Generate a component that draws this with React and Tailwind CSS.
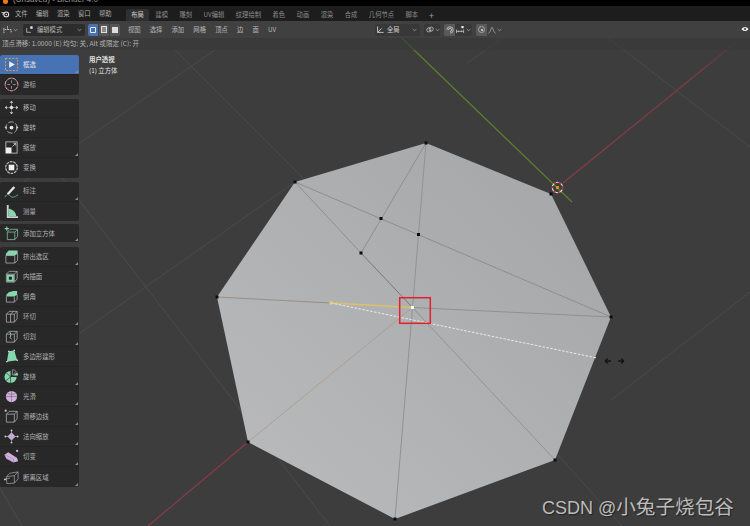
import React from "react";

const CJK = { fontFamily: '"Noto Sans CJK SC", "Liberation Sans", sans-serif' };

// --- tool icons, drawn on a 16x16 box ---
const G = "#86d6ae";
const P = "#cfb2dc";
const L = "#b4b4b4";

const Svg = ({ children }) => (
  <svg viewBox="0 0 16 16" className="w-[15px] h-[15px] shrink-0 ml-[3.5px] mr-[4.5px]" fill="none">
    {children}
  </svg>
);

const Cube = ({ c = L }) => (
  <g stroke={c} strokeWidth="0.8" strokeLinejoin="round">
    <path d="M2.5 5.5 L5.5 2.5 L14 2.5 L14 10.5 L11 14 L2.5 14 Z" />
    <path d="M2.5 5.5 L11 5.5 L11 14 M11 5.5 L14 2.5" />
  </g>
);

const icons = {
  select: (
    <Svg>
      <rect x="1.5" y="1.5" width="13" height="13" stroke="#e0a548" strokeWidth="1" strokeDasharray="2.2 1.4" />
      <path d="M5.5 4.5 L11.5 8 L5.5 11.5 Z" fill="#f0f0f0" />
    </Svg>
  ),
  cursor: (
    <Svg>
      <circle cx="8" cy="8" r="6.8" stroke="#c9c9c9" strokeWidth="1" />
      <circle cx="8" cy="8" r="6.8" stroke="#b0303c" strokeWidth="1" strokeDasharray="3 3" />
      <path d="M8 3.5 V6.5 M8 9.5 V12.5 M3.5 8 H6.5 M9.5 8 H12.5" stroke="#a8a8a8" strokeWidth="0.8" />
    </Svg>
  ),
  move: (
    <Svg>
      <path d="M8 5.5 L10.5 8 L8 10.5 L5.5 8 Z" fill="#e4e4e4" />
      <path d="M8 0.8 L10 3 H6 Z M8 15.2 L10 13 H6 Z M0.8 8 L3 6 V10 Z M15.2 8 L13 6 V10 Z" fill="#d8d8d8" />
      <path d="M8 3 V5 M8 11 V13 M3 8 H5 M11 8 H13" stroke="#9c9c9c" strokeWidth="0.8" />
    </Svg>
  ),
  rotate: (
    <Svg>
      <circle cx="8" cy="8" r="6" stroke="#c4c4c4" strokeWidth="0.9" strokeDasharray="6 2" />
      <circle cx="8" cy="8" r="2" fill="#e8e8e8" />
      <path d="M0.5 8 L3 6.5 V9.5 Z M15.5 8 L13 6.5 V9.5 Z" fill="#d0d0d0" />
    </Svg>
  ),
  scale: (
    <Svg>
      <rect x="2" y="2" width="12" height="12" stroke="#c4c4c4" strokeWidth="0.9" />
      <rect x="2" y="8" width="6" height="6" fill="#f0f0f0" />
      <path d="M9 7 L12.5 3.5 M10 3.5 H12.5 V6" stroke="#cfcfcf" strokeWidth="0.9" />
    </Svg>
  ),
  transform: (
    <Svg>
      <circle cx="8" cy="8" r="6.2" stroke="#b8b8b8" strokeWidth="1.3" strokeDasharray="3 0.8" />
      <rect x="5" y="5" width="6" height="6" fill="#efefef" />
    </Svg>
  ),
  annotate: (
    <Svg>
      <path d="M3 10 L10 2.5 L12 4 L5 11.5 Z" fill="#e4e4e4" />
      <path d="M1 14 C3 10 5 11 7 13 C9 15 11 14 15 11.5" stroke="#64b594" strokeWidth="1" />
    </Svg>
  ),
  measure: (
    <Svg>
      <path d="M3 1 H5 V13 H15 V15 H3 Z" fill="#cfcfcf" />
      <path d="M5 5 C9 5 13 9 13 13 H5 Z" fill={G} />
    </Svg>
  ),
  addCube: (
    <Svg>
      <g stroke="#7fb49c" strokeWidth="0.9">
        <path d="M3.5 6.5 L6.5 3.5 L14.5 3.5 L14.5 11 L11.5 14.5 L3.5 14.5 Z" />
        <path d="M3.5 6.5 L11.5 6.5 L11.5 14.5 M11.5 6.5 L14.5 3.5" />
      </g>
      <path d="M3 0.5 V5 M0.8 2.8 H5.2" stroke={G} strokeWidth="1.1" />
    </Svg>
  ),
  extrude: (
    <Svg>
      <path d="M2 5 L5 1.5 H14.5 V5 L11.5 7 H2 Z" fill={G} />
      <path d="M2 7 H11.5 V15 H2 Z M11.5 15 L14.5 12 V5" stroke={L} strokeWidth="0.8" />
    </Svg>
  ),
  inset: (
    <Svg>
      <Cube />
      <rect x="3" y="6" width="7.5" height="7.5" fill={G} />
      <rect x="5.2" y="8.2" width="3.2" height="3.2" fill="#1f2a25" />
    </Svg>
  ),
  bevel: (
    <Svg>
      <path d="M2.5 6 L5 3.5 L10 2 L14 2 L14 6 L11 8 H2.5 Z" fill={G} />
      <path d="M2.5 8 V14 H11 V8 M11 14 L14 11 V6" stroke={L} strokeWidth="0.8" />
    </Svg>
  ),
  loop: (
    <Svg>
      <Cube />
      <path d="M7 5.5 V14 M7 5.5 L10 2.5" stroke={L} strokeWidth="0.8" />
    </Svg>
  ),
  knife: (
    <Svg>
      <Cube />
      <path d="M6 3 L7.5 6 L6.5 9 L8 11" stroke={G} strokeWidth="1" />
    </Svg>
  ),
  poly: (
    <Svg>
      <path d="M5 2.5 L11 1.5 L14 12 L3 13.5 Z" fill={G} />
      <path d="M5 2.5 h.1 M11 1.5 h.1 M14 12 h.1 M3 13.5 h.1" stroke="#dcdcdc" strokeWidth="1.4" strokeLinecap="square" />
    </Svg>
  ),
  spin: (
    <Svg>
      <path d="M7 8.5 L7 2 A6.5 6.5 0 1 0 13.5 8.5 Z" fill={G} />
      <path d="M7 8.5 L2.5 4 M7 8.5 L2 12.5 M7 8.5 L7 15" stroke="#2b2b2b" strokeWidth="0.7" />
      <path d="M9 6.5 L9 0.8 A6 6 0 0 1 13 2.5 Z" stroke="#b0b0b0" strokeWidth="0.7" />
      <path d="M9.5 7 L14 3.5 A6 6 0 0 1 15 7 Z" fill={G} />
    </Svg>
  ),
  smooth: (
    <Svg>
      <circle cx="8" cy="8" r="6" fill={P} />
      <path d="M2 8 H14 M8 2 V14 M3.5 4.5 C6 6 10 6 12.5 4.5" stroke="#6f5f7a" strokeWidth="0.6" />
    </Svg>
  ),
  slide: (
    <Svg>
      <Cube />
      <circle cx="1.8" cy="1.8" r="1.2" fill={P} />
    </Svg>
  ),
  normal: (
    <Svg>
      <path d="M8 4 L12 8 L8 12 L4 8 Z" fill={P} />
      <path d="M8 1 V15 M1 8 H15 M4 8 L8 4 L12 8 L8 12 Z" stroke="#b9a6c4" strokeWidth="0.7" />
      <circle cx="8" cy="1.5" r="1" fill="#cfcfcf" />
      <circle cx="8" cy="14.5" r="1" fill="#cfcfcf" />
      <circle cx="1.5" cy="8" r="1" fill="#cfcfcf" />
      <circle cx="14.5" cy="8" r="1" fill="#cfcfcf" />
    </Svg>
  ),
  shear: (
    <Svg>
      <path d="M0.5 6 L4.5 3.5 L14 9.5 L15 13 L10 14.5 L2.5 10.5 Z" fill={P} />
      <path d="M2.5 10 L10.5 14 L10 10.5 L0.5 6" stroke="#8d7a98" strokeWidth="0.5" />
      <circle cx="14" cy="2" r="1.2" fill={P} />
    </Svg>
  ),
  rip: (
    <Svg>
      <path d="M2.5 7 L6 3.5 L15 2 L15 9.5 L11 14 L3 14.5 Z M3 7 L11 6 L11 14 M11 6 L15 2" stroke={L} strokeWidth="0.7" />
      <path d="M0.8 10 L6.5 8.5" stroke={L} strokeWidth="0.7" />
      <circle cx="1" cy="10" r="1" fill="#d0d0d0" />
    </Svg>
  ),
};

const groups = [
  { mt: "mt-[5px]", h: "h-[19.8px]", items: [
    { icon: "select", label: "框选", active: true, more: true },
    { icon: "cursor", label: "游标" },
  ] },
  { mt: "mt-[4px]", h: "h-[19.8px]", items: [
    { icon: "move", label: "移动" },
    { icon: "rotate", label: "旋转" },
    { icon: "scale", label: "缩放", more: true },
    { icon: "transform", label: "变换" },
  ] },
  { mt: "mt-[4px]", h: "h-[19.8px]", items: [
    { icon: "annotate", label: "标注", more: true },
    { icon: "measure", label: "测量" },
  ] },
  { mt: "mt-[3px]", h: "h-[18px]", items: [
    { icon: "addCube", label: "添加立方体", more: true },
  ] },
  { mt: "mt-[5px]", h: "h-5", items: [
    { icon: "extrude", label: "挤出选区", more: true },
    { icon: "inset", label: "内插面" },
    { icon: "bevel", label: "倒角" },
    { icon: "loop", label: "环切", more: true },
    { icon: "knife", label: "切割", more: true },
    { icon: "poly", label: "多边形建形" },
    { icon: "spin", label: "旋绕", more: true },
    { icon: "smooth", label: "光滑", more: true },
    { icon: "slide", label: "滑移边线", more: true },
    { icon: "normal", label: "法向缩放", more: true },
    { icon: "shear", label: "切变", more: true },
    { icon: "rip", label: "断离区域", more: true },
  ] },
];

const ToolRow = ({ icon, label, active, more, h }) => (
  <div
    className={`relative flex items-center border-b border-[#232323] last:border-b-0 text-[6.4px] ${h} ${
      active ? "bg-[#4772b3] text-[#e6e6e6]" : "text-[#b4b4b4]"
    }`}
  >
    {icons[icon]}
    <span>{label}</span>
    {more && <span className="absolute right-[1px] bottom-[1px] w-0 h-0 border-l-[3px] border-l-transparent border-b-[3px] border-b-[#8a8a8a]" />}
  </div>
);

// --- header bits ---
const menu = ["文件", "编辑", "渲染", "窗口", "帮助"];
const tabs = ["布局", "建模", "雕刻", "UV编辑", "纹理绘制", "着色", "动画", "渲染", "合成", "几何节点", "脚本"];
const viewMenu = ["视图", "选择", "添加", "网格", "顶点", "边", "面", "UV"];

const Chevron = () => (
  <svg viewBox="0 0 6 4" className="w-[5px] h-[4px] shrink-0" fill="none">
    <path d="M0.8 0.8 L3 3 L5.2 0.8" stroke="#a8a8a8" strokeWidth="0.9" />
  </svg>
);

const BlenderLogo = () => (
  <svg viewBox="0 0 12 10" className="w-[9px] h-[8px] shrink-0" fill="none">
    <circle cx="7" cy="5.5" r="3.2" stroke="#e0e0e0" strokeWidth="1.4" />
    <circle cx="7" cy="5.5" r="1" fill="#e0e0e0" />
    <path d="M0.5 3.2 H5 M2 6 L4.5 3.5" stroke="#e0e0e0" strokeWidth="1.2" />
  </svg>
);

// --- the 3D view, page coordinates ---
const outline = "426,143 551,194 611,317 555,460 395,519 248,442 217,297 295,182";
const verts = [
  [426, 143], [551, 194], [611, 317], [555, 460], [395, 519], [248, 442], [217, 297], [295, 182],
  [381, 218.5], [418.5, 234.5], [361, 253],
];
const grid = [
  [0, 198, 215, 50],
  [80, 333, 295, 182],
  [467, 63, 535, 16],
  [62, 178, 330, 526],
  [175, 50, 303, 178],
  [0, 488, 22, 526],
  [587, 22, 750, 147],
  [750, 292, 611, 400],
  [558, 455, 622, 526],
];

const Viewport = () => (
  <svg className="absolute inset-0" width="750" height="526" viewBox="0 0 750 526" fill="none">
    <defs>
      <linearGradient id="mesh" x1="560" y1="170" x2="270" y2="480" gradientUnits="userSpaceOnUse">
        <stop offset="0" stopColor="#a6a7a9" />
        <stop offset="1" stopColor="#b8b9bb" />
      </linearGradient>
      <linearGradient id="redFade" x1="563" y1="183" x2="745" y2="35" gradientUnits="userSpaceOnUse">
        <stop offset="0" stopColor="#8b3a47" />
        <stop offset="0.75" stopColor="#7c3a45" />
        <stop offset="1" stopColor="#4a3a3d" />
      </linearGradient>
      <linearGradient id="greenFade" x1="557" y1="188" x2="385" y2="22" gradientUnits="userSpaceOnUse">
        <stop offset="0" stopColor="#5a8029" />
        <stop offset="0.8" stopColor="#5a8029" />
        <stop offset="1" stopColor="#474f38" />
      </linearGradient>
    </defs>

    {grid.map(([a, b, c, d], i) => (
      <line key={i} x1={a} y1={b} x2={c} y2={d} stroke="#4a4a4a" strokeWidth="1" />
    ))}

    <line x1="385" y1="22" x2="572" y2="202" stroke="url(#greenFade)" strokeWidth="1.2" />
    <line x1="563" y1="183" x2="745" y2="35" stroke="url(#redFade)" strokeWidth="1.2" />
    <line x1="248" y1="442" x2="148" y2="526" stroke="#8b3a47" strokeWidth="1.2" />

    <polygon points={outline} fill="url(#mesh)" />

    {/* mesh edges */}
    <g strokeWidth="0.9">
      <line x1="426" y1="143" x2="412.5" y2="307.5" stroke="#8f9091" />
      <line x1="412.5" y1="307.5" x2="395" y2="519" stroke="#8c8d8f" />
      <line x1="295" y1="182" x2="611" y2="317" stroke="#8d8a86" />
      <line x1="426" y1="143" x2="361" y2="253" stroke="#8d8a86" />
      <line x1="295" y1="182" x2="361" y2="253" stroke="#8d8a86" />
      <line x1="361" y1="253" x2="412.5" y2="307.5" stroke="#7d6f60" />
      <line x1="412.5" y1="307.5" x2="555" y2="460" stroke="#8f9091" />
      <line x1="412.5" y1="307.5" x2="611" y2="317" stroke="#8c8d8f" />
      <line x1="217" y1="297" x2="331" y2="303" stroke="#98897c" />
      <line x1="248" y1="442" x2="412.5" y2="307.5" stroke="#b09c88" />
      <line x1="331" y1="303" x2="412.5" y2="307.5" stroke="#dcc06a" strokeWidth="1.3" />
      <line x1="331" y1="303" x2="597" y2="358" stroke="#ececec" strokeWidth="1" strokeDasharray="2.5 1.5" />
    </g>

    {verts.map(([x, y], i) => (
      <rect key={i} x={x - 1.5} y={y - 1.5} width="3" height="3" fill="#0c0c0c" />
    ))}
    <rect x="329.5" y="301.5" width="3" height="3" fill="#e2d27c" />
    <rect x="411" y="306" width="3" height="3" fill="#ffffff" />

    <rect x="399.7" y="297.7" width="30.6" height="25.6" stroke="#e0202c" strokeWidth="1.5" />

    {/* 3D cursor */}
    <circle cx="557.5" cy="187.5" r="5.2" stroke="#e8e8e8" strokeWidth="1.1" />
    <circle cx="557.5" cy="187.5" r="5.2" stroke="#b8202c" strokeWidth="1.1" strokeDasharray="2.5 2.5" />
    <rect x="556" y="186" width="3" height="3" fill="#e08a20" />

    {/* slide cursor */}
    <path d="M605 361 H611 M605 361 L608 358.5 M605 361 L608 363.5 M624 361 H618 M624 361 L621 358.5 M624 361 L621 363.5" stroke="#141414" strokeWidth="1.3" />
  </svg>
);

export default function App() {
  return (
    <div className="relative w-[750px] h-[526px] overflow-hidden bg-[#3d3d3d] flex flex-col" style={CJK}>
      <Viewport />

      {/* window title, cut off by the crop */}
      <div className="relative h-[6px] bg-black flex items-end overflow-hidden pl-[3px] gap-[3px] text-[8px] leading-[10px] text-[#9a9a9a] shrink-0">
        <span className="w-[5px] h-[5px] rounded-full bg-[#e87d0d] mb-[2px]" />
        <span className="ml-[2px] mb-[1px]" style={{ fontFamily: '"Liberation Sans", sans-serif' }}>(Unsaved) - Blender 4.0</span>
      </div>

      {/* top menu and workspaces */}
      <div className="relative h-[15px] bg-[#1d1d1d] flex items-center text-[6.3px] text-[#b0b0b0] shrink-0">
        <span className="ml-[1px] mr-[5px]"><BlenderLogo /></span>
        <div className="flex gap-[8.4px]">
          {menu.map((m) => <span key={m}>{m}</span>)}
        </div>
        <div className="flex ml-[14px] self-end h-[12px] items-center">
          {tabs.map((t, i) => (
            <span
              key={i}
              className={`px-[5px] mx-[0.75px] h-full flex items-center rounded-t-[2px] ${i === 0 ? "bg-[#303030] text-[#d0d0d0]" : "text-[#8c8c8c]"}`}
            >
              {t}
            </span>
          ))}
          <span className="ml-[5px] text-[#a0a0a0] text-[9px] leading-none">+</span>
        </div>
      </div>

      {/* 3D view header */}
      <div className="relative h-[17px] bg-[#404040]/90 flex items-center text-[6.3px] text-[#b8b8b8] shrink-0">
        <div className="flex items-center gap-[1px] ml-[3px] w-[16px]">
          <svg viewBox="0 0 10 10" className="w-[9px] h-[9px] shrink-0" fill="none">
            <path d="M1 9 V5 H5 V1 M5 5 H9 V9 M1 5 V3" stroke="#c8c8c8" strokeWidth="1" strokeDasharray="1.8 0.7" />
          </svg>
          <Chevron />
        </div>
        <div className="ml-[4px] w-[62px] h-[12px] bg-[#2c2c2c] rounded-[2px] flex items-center px-[3px]">
          <svg viewBox="0 0 10 10" className="w-[7px] h-[7px] shrink-0 mr-[4px]" fill="none">
            <path d="M1 3 V9 H7" stroke="#d8d8d8" strokeWidth="1" />
            <rect x="6" y="0.5" width="3.5" height="3.5" fill="#e4e4e4" />
          </svg>
          <span className="flex-1">编辑模式</span>
          <Chevron />
        </div>
        <div className="ml-[3px] flex gap-[1px]">
          <div className="w-[10px] h-[12px] rounded-l-[2px] bg-[#4772b3] flex items-center justify-center">
            <span className="w-[6px] h-[6px] border border-[#e8e8e8] rounded-tl-[1px]" />
          </div>
          <div className="w-[10px] h-[12px] bg-[#565656] flex items-center justify-center">
            <span className="w-[6px] h-[7px] border border-[#e0e0e0] bg-[#8a8a8a]" />
          </div>
          <div className="w-[10px] h-[12px] rounded-r-[2px] bg-[#565656] flex items-center justify-center">
            <span className="w-[6px] h-[6px] bg-[#dedede]" />
          </div>
        </div>
        <div className="ml-[8px] flex gap-[9.2px] w-[247px]">
          {viewMenu.map((m) => <span key={m}>{m}</span>)}
        </div>
        <div className="flex items-center">
          <div className="w-[45px] h-[12px] bg-[#383838] rounded-[2px] flex items-center pl-[1px] pr-[3px]">
            <svg viewBox="0 0 10 10" className="w-[8px] h-[8px] mr-[3px] shrink-0" fill="none">
              <path d="M2 0.5 V8 H9.5 M2 8 L7 3" stroke="#d0d0d0" strokeWidth="1.1" />
            </svg>
            <span className="flex-1 text-[#d0d0d0]">全局</span>
            <Chevron />
          </div>
          <div className="ml-[4px] w-[16px] h-[12px] bg-[#383838] rounded-[2px] flex items-center pl-[2px] gap-[1px]">
            <svg viewBox="0 0 10 8" className="w-[8px] h-[7px] shrink-0" fill="none">
              <circle cx="3.5" cy="4.5" r="2.6" stroke="#d0d0d0" strokeWidth="0.9" />
              <circle cx="6.5" cy="3.5" r="2.6" stroke="#d0d0d0" strokeWidth="0.9" />
            </svg>
            <Chevron />
          </div>
          <div className="ml-[4px] w-[11px] h-[12px] bg-[#595959] rounded-l-[2px] flex items-center justify-center">
            <svg viewBox="0 0 10 10" className="w-[8px] h-[8px]" fill="none">
              <path d="M1 5 A4 4 0 1 1 5 9 M3 5 A2 2 0 1 1 5 7" stroke="#cfcfcf" strokeWidth="1" />
            </svg>
          </div>
          <div className="w-[17px] h-[12px] bg-[#383838] rounded-r-[2px] flex items-center pl-[1px] gap-[1px]">
            <svg viewBox="0 0 10 9" className="w-[9px] h-[8px] shrink-0" fill="none">
              <path d="M0.5 4 V8 M0.5 6 H8.5 M3 5 V7 M6 5 V7 M8.5 4 V8" stroke="#d0d0d0" strokeWidth="0.8" />
              <rect x="6" y="0" width="2.5" height="2.5" fill="#f0f0f0" />
            </svg>
            <Chevron />
          </div>
          <div className="ml-[4px] w-[11px] h-[12px] bg-[#595959] rounded-l-[2px] flex items-center justify-center">
            <span className="w-[7px] h-[7px] rounded-full border border-[#a8a8a8] flex items-center justify-center">
              <span className="w-[2px] h-[2px] rounded-full bg-[#e0e0e0]" />
            </span>
          </div>
          <div className="w-[16px] h-[12px] flex items-center pl-[1px] gap-[1px]">
            <svg viewBox="0 0 10 9" className="w-[8px] h-[8px] shrink-0" fill="none">
              <path d="M0.5 8.5 C3 8 4 1 5 1 C6 1 7 8 9.5 8.5" stroke="#b0b0b0" strokeWidth="0.9" />
            </svg>
            <Chevron />
          </div>
        </div>
        <div className="ml-auto mr-[1px] w-[8px] h-[8px] flex items-center">
          <svg viewBox="0 0 10 10" className="w-[9px] h-[8px]" fill="none">
            <path d="M0.5 4 C3 0.5 7 0.5 9.5 4 C7 7 3 7 0.5 4 Z" fill="#e8e8e8" />
            <circle cx="5" cy="3.8" r="1.3" fill="#444" />
          </svg>
        </div>
      </div>

      {/* tool settings */}
      <div className="relative h-[12px] bg-[#383838]/60 flex items-center pl-[2px] text-[6.6px] text-[#b4b4b4] shrink-0">
        顶点滑移: 1.0000 (E) 均匀: 关, Alt 或限定 (C): 开
      </div>

      {/* toolbar + overlay text */}
      <div className="relative flex flex-1 min-h-0">
        <div className="w-[79px] shrink-0">
          {groups.map((g, i) => (
            <div key={i} className={`${g.mt} bg-[#282828] rounded-[2px] overflow-hidden`}>
              {g.items.map((t) => <ToolRow key={t.label} {...t} h={g.h} />)}
            </div>
          ))}
        </div>
        <div className="ml-[10px] mt-[3.5px] text-[6.4px] leading-[11px] text-[#e2e2e2]">
          <div className="font-bold">用户透视</div>
          <div>(1) 立方体</div>
        </div>
      </div>

      {/* watermark */}
      <div
        className="absolute left-[542px] top-[493px] text-[19.6px] leading-[26px] text-[#bcbcbc] whitespace-nowrap [text-shadow:1px_1px_1px_#222]"
      >
        <span className="text-[18px]" style={{ fontFamily: '"Liberation Sans", sans-serif' }}>CSDN @</span>小兔子烧包谷
      </div>
    </div>
  );
}
